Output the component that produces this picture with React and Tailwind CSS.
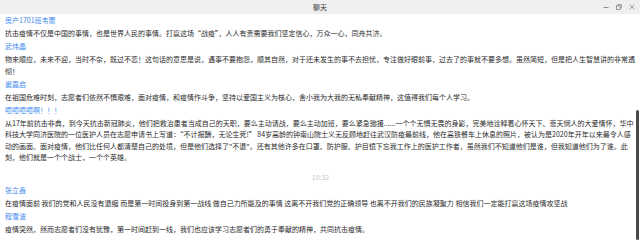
import React from "react";

const font = { fontFamily: '"Noto Sans CJK SC", "Noto Sans", sans-serif' };

function Name({ children }) {
  return <div className="text-[7px] leading-[11.5px] mb-[1.5px] text-[#3d8af0] whitespace-nowrap">{children}</div>;
}

function Msg({ lines }) {
  return (
    <div className="text-[7px] leading-[11.5px] mb-[1.5px] text-[#2a2a2a]">
      {lines.map((l, i) => (
        <div key={i} className="whitespace-nowrap">{l}</div>
      ))}
    </div>
  );
}

export default function App() {
  return (
    <div className="w-[640px] h-[244px] bg-white flex flex-col overflow-hidden" style={font}>
      <div className="h-[14px] bg-[#efefef] flex items-center relative shrink-0">
        <div className="flex-1 text-center text-[7px] text-[#333] leading-[14px]">聊天</div>
        <div className="absolute right-[5px] top-0 h-[14px] flex items-center gap-[7px] text-[#777]">
          <svg width="6" height="6" viewBox="0 0 6 6"><path d="M0.5 3.5H5.5" stroke="#777" strokeWidth="0.8" /></svg>
          <svg width="6" height="6" viewBox="0 0 6 6" fill="none"><rect x="0.5" y="1.8" width="3.6" height="3.6" stroke="#777" strokeWidth="0.7" /><path d="M1.9 1.8V0.6H5.4V4.1H4.1" stroke="#777" strokeWidth="0.7" /></svg>
          <svg width="6" height="6" viewBox="0 0 6 6"><path d="M0.8 0.8L5.2 5.2M5.2 0.8L0.8 5.2" stroke="#777" strokeWidth="0.7" /></svg>
        </div>
      </div>
      <div className="flex flex-1 min-h-0">
        <div className="flex-1 pl-[5px] pt-[1px] overflow-hidden">
          <Name>房产1701班韦蕾</Name>
          <Msg lines={["抗击疫情不仅是中国的事情，也是世界人民的事情。打赢这场“战疫”，人人有责需要我们坚定信心，万众一心，同舟共济。"]} />
          <Name>武炜晶</Name>
          <Msg lines={["物来顺应，未来不迎，当时不杂，既过不恋！这句话的意思是说，遇事不要抱怨，顺其自然，对于还未发生的事不去担忧，专注做好眼前事，过去了的事就不要多想。虽然简短，但是把人生智慧讲的非常透", "彻！"]} />
          <Name>窦嘉启</Name>
          <Msg lines={["在祖国危难时刻，志愿者们依然不惧艰难，面对疫情，和疫情作斗争，坚持以爱国主义为核心，舍小我为大我的无私奉献精神，这值得我们每个人学习。"]} />
          <Name>噫噫噫噫啊！！！</Name>
          <Msg
            lines={[
              "从17年前抗击非典，到今天抗击新冠肺炎，他们把救治患者当成自己的天职，要么主动请战，要么主动加班，要么紧急驰援......一个个无惧无畏的身影，完美地诠释着心怀天下、悲天悯人的大爱情怀，华中",
              "科技大学同济医院的一位医护人员在志愿申请书上写道：“不计报酬，无论生死!” 84岁高龄的钟南山院士义无反顾地赶往武汉防疫最前线，他在高铁餐车上休息的照片，被认为是2020年开年以来最令人感",
              "动的画面。面对疫情，他们比任何人都清楚自己的处境，但是他们选择了\"不退\"。还有其他许多在口罩、防护服、护目镜下忘我工作上的医护工作者，虽然我们不知道他们是谁，但我知道他们为了谁。此",
              "刻，他们就是一个个战士，一个个英雄。",
            ]}
          />
          <div className="pt-[6.5px] mb-[1.5px] text-center text-[7px] leading-[11.5px] text-[#c4c4c4]">10:32</div>
          <Name>张立鑫</Name>
          <Msg lines={["在疫情面前 我们的党和人民没有退缩 而是第一时间投身到第一战线 做自己力所能及的事情 这离不开我们党的正确领导 也离不开我们的民族凝聚力 相信我们一定能打赢这场疫情攻坚战"]} />
          <Name>程雪波</Name>
          <Msg lines={["疫情突然，然而志愿者们没有犹豫，第一时间赶到一线，我们也应该学习志愿者们的勇于奉献的精神，共同抗击疫情。"]} />
        </div>
        <div className="w-[4px] shrink-0 flex flex-col pt-[96px] pb-[4px] pr-[1px]">
          <div className="flex-1 w-[3px] rounded-[1.5px] bg-[#4a4a4a]"></div>
        </div>
      </div>
    </div>
  );
}
